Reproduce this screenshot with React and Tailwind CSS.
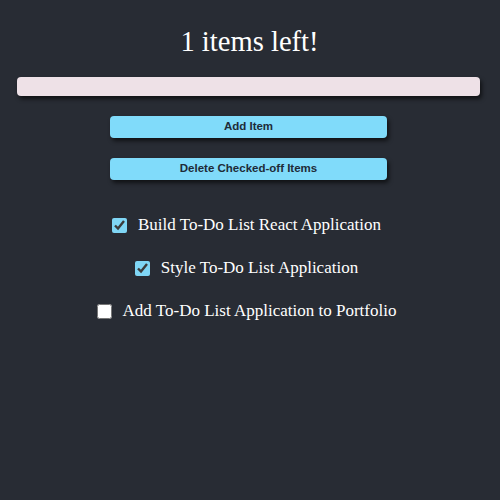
import React, { useState } from "react";

const App = () => {
  const [items, setItems] = useState([
    { id: 1, text: "Build To-Do List React Application", done: true },
    { id: 2, text: "Style To-Do List Application", done: true },
    { id: 3, text: "Add To-Do List Application to Portfolio", done: false },
  ]);

  const left = items.filter((i) => !i.done).length;

  const toggle = (id) =>
    setItems(items.map((i) => (i.id === id ? { ...i, done: !i.done } : i)));

  return (
    <div className="min-h-[500px] bg-[#282c34] text-white font-['Liberation_Serif',serif]">
      <h1 className="pt-[24px] pr-[1px] text-center text-[28.6px] leading-[36px]">
        {left} items left!
      </h1>

      <div className="mt-[17px] ml-[17px] w-[463px] h-[19px] rounded-[4px] bg-[#eee1e7] shadow-[2px_3px_4px_rgba(0,0,0,0.6)]" />

      <div className="mt-[20px] pr-[3px] flex flex-col items-center gap-[20px] font-['Liberation_Sans',sans-serif]">
        <button className="w-[277px] h-[22px] rounded-[4px] bg-[#80dbfa] text-[11.5px] font-bold text-[#1e2b38] shadow-[2px_3px_4px_rgba(0,0,0,0.6)]">
          Add Item
        </button>
        <button className="w-[277px] h-[22px] rounded-[4px] bg-[#80dbfa] text-[11.5px] font-bold text-[#1e2b38] shadow-[2px_3px_4px_rgba(0,0,0,0.6)]">
          Delete Checked-off Items
        </button>
      </div>

      <ul className="mt-[33px] pr-[7px] flex flex-col items-center gap-[19px]">
        {items.map((item) => (
          <li key={item.id} className="flex items-center h-[24px] text-[17px]">
            <input
              type="checkbox"
              checked={item.done}
              onChange={() => toggle(item.id)}
              className="w-[15px] h-[15px] mr-[11px] accent-[#7fd6f5]"
            />
            <span>{item.text}</span>
          </li>
        ))}
      </ul>
    </div>
  );
};

export default App;
